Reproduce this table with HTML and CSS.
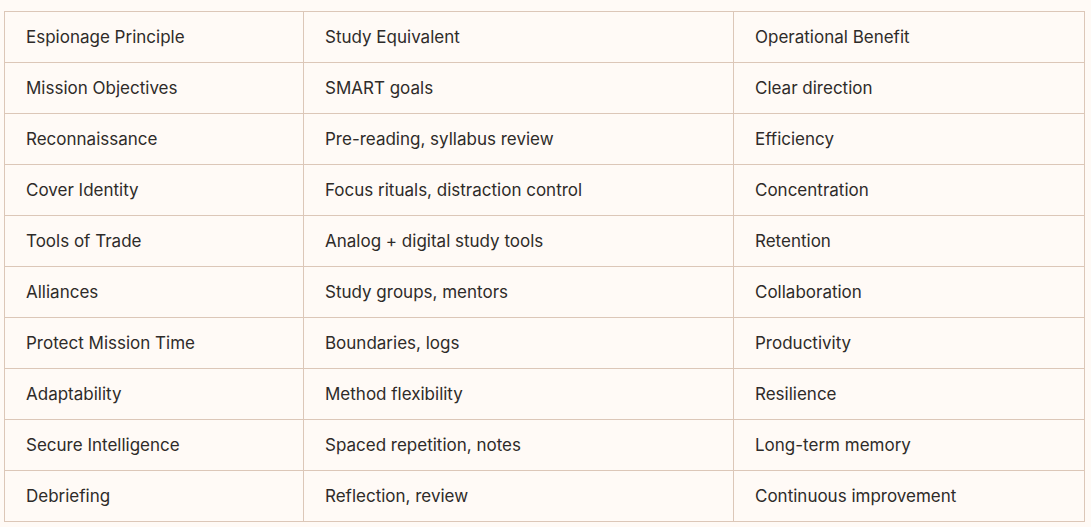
FILE: index.html
```html
<!DOCTYPE html>
<html lang="en">
<head>
<meta charset="utf-8">
<title>Espionage Study Table</title>
<link rel="stylesheet" href="styles.css">
</head>
<body>
<div class="wrap">
  <table class="grid">
    <colgroup>
      <col class="c1"><col class="c2"><col class="c3">
    </colgroup>
    <tbody>
      <tr><td>Espionage Principle</td><td>Study Equivalent</td><td>Operational Benefit</td></tr>
      <tr><td>Mission Objectives</td><td>SMART goals</td><td>Clear direction</td></tr>
      <tr><td>Reconnaissance</td><td>Pre-reading, syllabus review</td><td>Efficiency</td></tr>
      <tr><td>Cover Identity</td><td>Focus rituals, distraction control</td><td>Concentration</td></tr>
      <tr><td>Tools of Trade</td><td>Analog + digital study tools</td><td>Retention</td></tr>
      <tr><td>Alliances</td><td>Study groups, mentors</td><td>Collaboration</td></tr>
      <tr><td>Protect Mission Time</td><td>Boundaries, logs</td><td>Productivity</td></tr>
      <tr><td>Adaptability</td><td>Method flexibility</td><td>Resilience</td></tr>
      <tr><td>Secure Intelligence</td><td>Spaced repetition, notes</td><td>Long-term memory</td></tr>
      <tr><td>Debriefing</td><td>Reflection, review</td><td>Continuous improvement</td></tr>
    </tbody>
  </table>
</div>
</body>
</html>
```
FILE: styles.css
```css
html, body {
  margin: 0;
  padding: 0;
  background: #fffaf6;
}
body {
  font-family: Inter, "Liberation Sans", sans-serif;
  color: #2e2b29;
}
.wrap {
  padding: 11px 7px 0 4px;
}
.grid {
  width: 1080px;
  border-collapse: collapse;
  table-layout: fixed;
  font-size: 17px;
}
.c1 { width: 299px; }
.c2 { width: 430px; }
.c3 { width: 351px; }
.grid td {
  border: 1px solid #dcc7b8;
  height: 51px;
  padding: 0 21px 1px;
  box-sizing: border-box;
  vertical-align: middle;
  line-height: 20px;
}
```
